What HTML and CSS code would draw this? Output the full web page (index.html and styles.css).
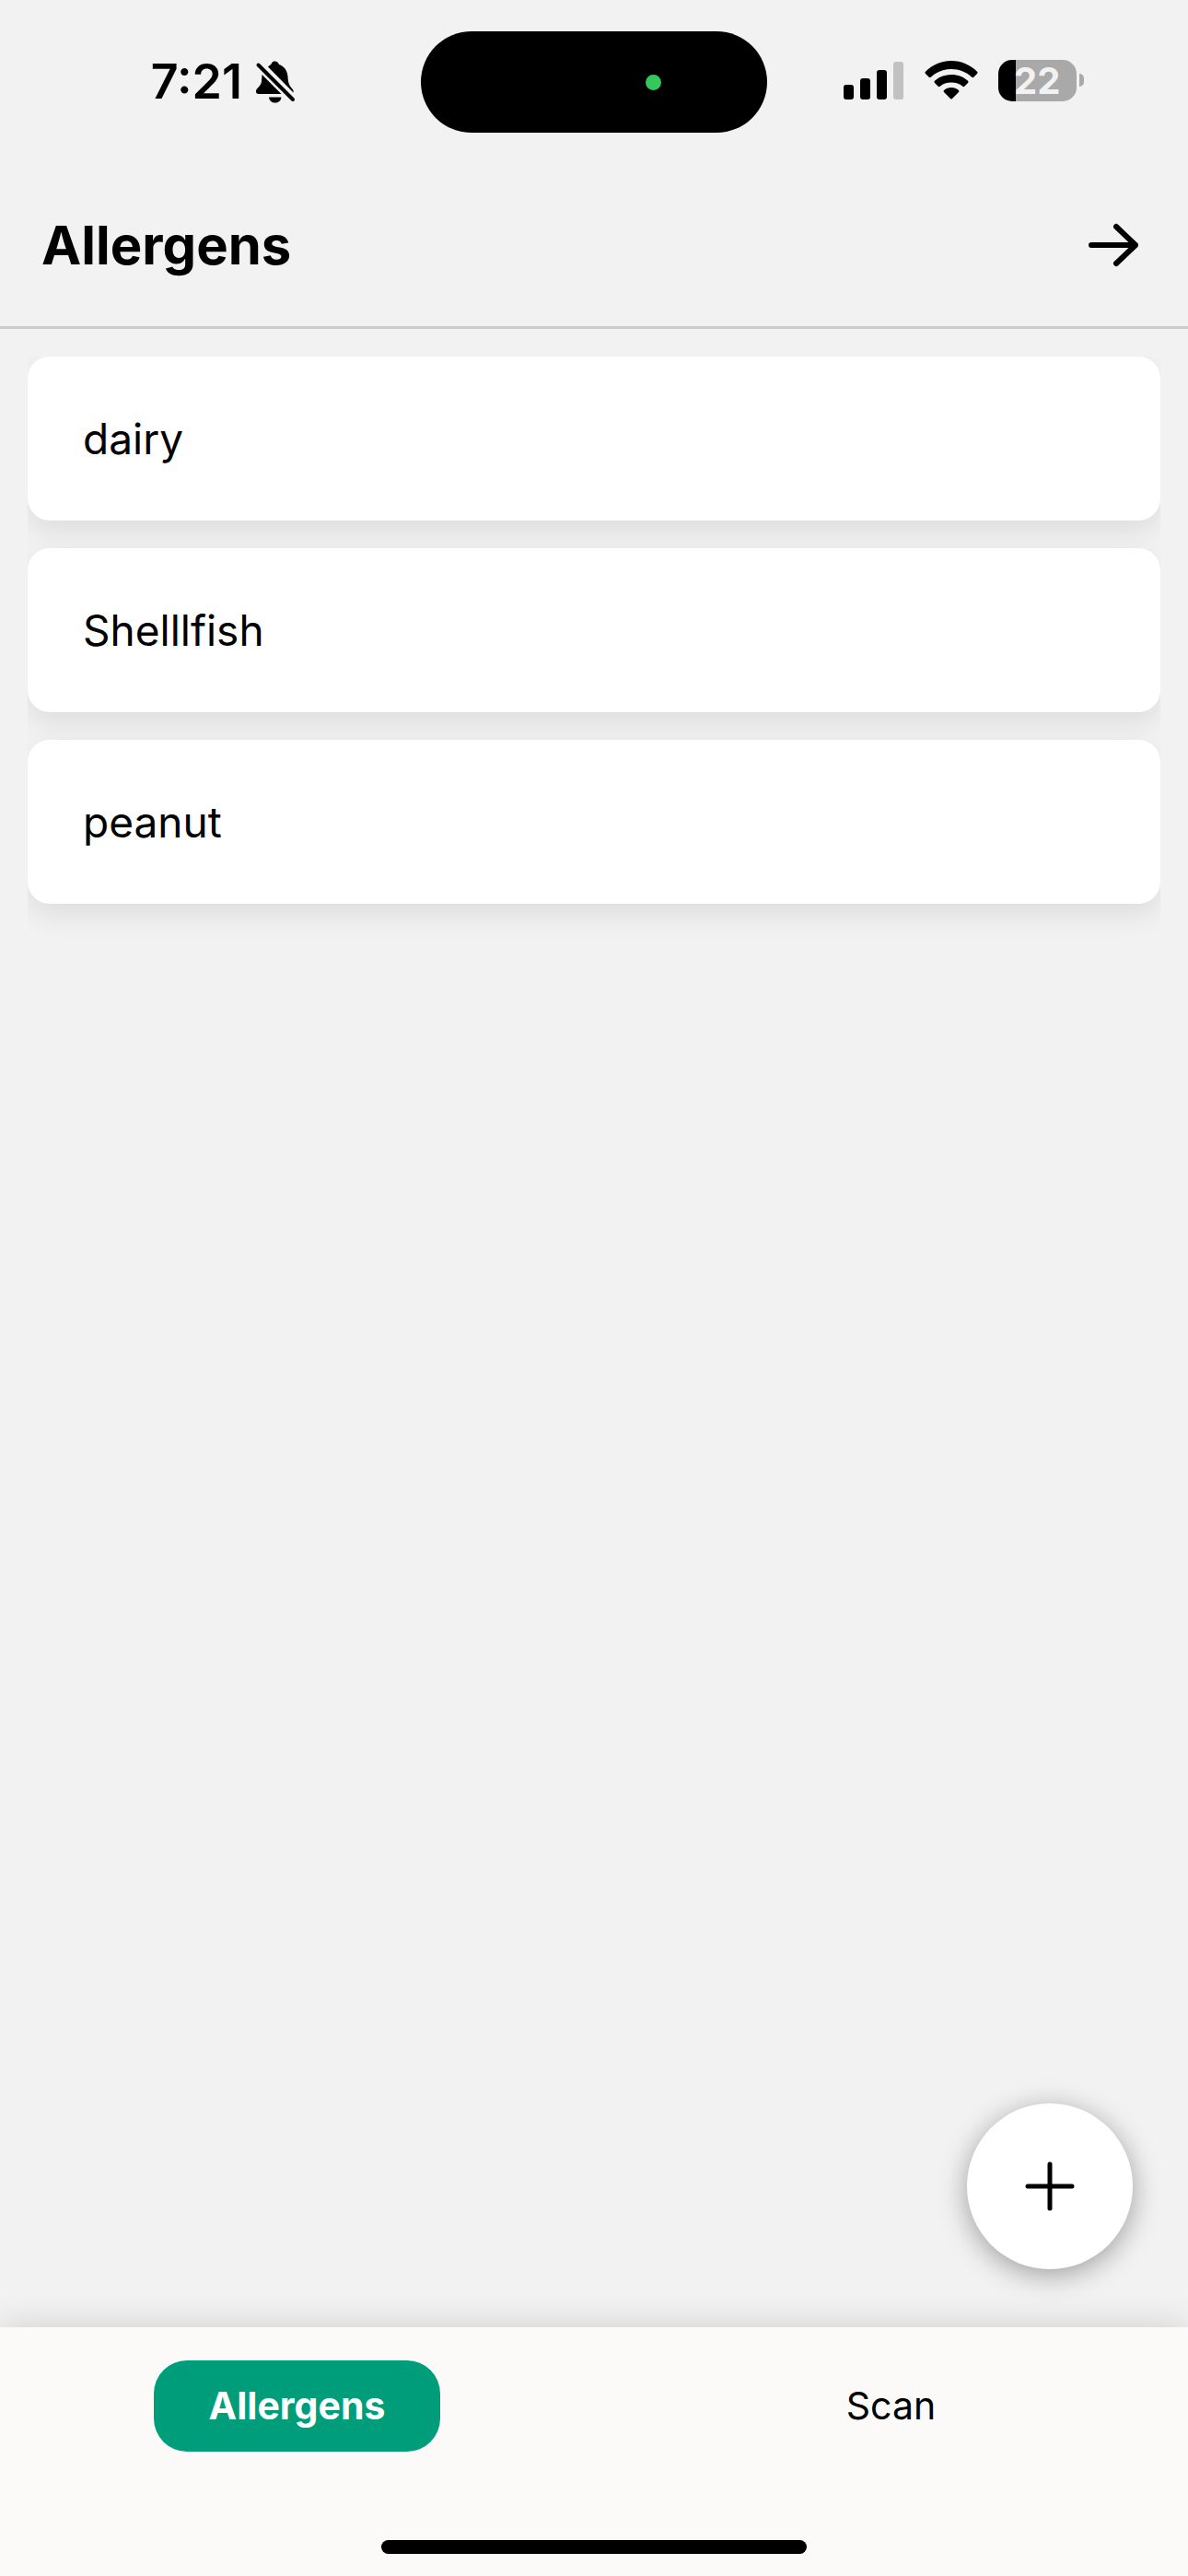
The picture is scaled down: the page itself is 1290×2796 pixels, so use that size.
FILE: index.html
```html
<!DOCTYPE html>
<html lang="en">
	<head>
		<meta charset="UTF-8" />
		<meta name="viewport" content="width=device-width, initial-scale=1.0" />
		<title>Allergens</title>
		<link rel="stylesheet" href="styles.css">
	</head>
	<body>
		<div class="status-bar">
			<div class="status-left">
				<span class="time">7:21</span>
				<svg class="bell" viewBox="0 0 44 48" width="44" height="48" aria-hidden="true">
					<path d="M14 7.500C15.500 6 17 5.500 17.500 4.500C18.500 2 20 1.500 21.500 1.500C23.500 1.500 25 2.500 26 5C31.500 7 35 11.500 35.500 18C35.800 25 37 27.500 40 31C41.500 32.500 42 34 41.500 35.500Z" />
					<path d="M7.500 16L28.500 37H4C1.500 37 .7 35.500 1 33.500C1.500 30.500 6 29 7 23.500Z" />
					<path d="M15 40.500H28.500C28 44.500 25 46.500 21.700 46.500C18.500 46.500 15.500 44.500 15 40.500Z" />
					<path class="slash" d="M3.500 5.500L41 43" />
				</svg>
			</div>
			<div class="island"><span class="camera-dot"></span></div>
			<div class="status-right">
				<svg viewBox="0 0 66 42" width="66" height="42" aria-hidden="true">
					<rect x="0" y="26" width="11" height="16" rx="3" />
					<rect x="18" y="19" width="11" height="23" rx="3" />
					<rect x="36" y="10" width="11" height="32" rx="3" />
					<rect x="54" y="1" width="11" height="41" rx="3" fill="#c1c1c1" />
				</svg>
				<svg viewBox="0 0 58 42" width="58" height="42" aria-hidden="true">
					<path d="M29 0C40 0 50 4.500 57.300 12Q58 13 57 14L53 18Q52 18.500 51 17.500C45 12 37.500 9 29 9C20.500 9 13 12 7 17.500Q6 18.500 5 18L1 14Q0 13 .7 12C8 4.500 18 0 29 0Z" />
					<path d="M29 15C36 15 42.500 17.500 47.300 22Q48 23 47 24L43 28Q42 28.500 41 27.500C38 25 34 23.500 29 23.500C24 23.500 20 25 17 27.500Q16 28.500 15 28L11 24Q10 23 10.700 22C15.500 17.500 22 15 29 15Z" />
					<path d="M29 29C32 29 35 30 37 32Q38 33 37 34L30 41Q29 42 28 41L21 34Q20 33 21 32C23 30 26 29 29 29Z" />
				</svg>
				<div class="battery">
					<span class="battery-level">22</span>
					<span class="battery-tip"></span>
				</div>
			</div>
		</div>

		<header class="header">
			<h1>Allergens</h1>
			<button class="next-button" aria-label="Next">
				<svg viewBox="0 0 54 48" width="54" height="48" aria-hidden="true">
					<path d="M3 24H51M30 4L51 24L30 44" />
				</svg>
			</button>
		</header>

		<main class="content">
			<ul class="allergen-list">
				<li>dairy</li>
				<li>Shelllfish</li>
				<li>peanut</li>
			</ul>
			<button class="add-button" aria-label="Add allergen">
				<svg viewBox="0 0 54 54" width="54" height="54" aria-hidden="true">
					<path d="M27 3V51M3 27H51" />
				</svg>
			</button>
		</main>

		<footer class="footer">
			<nav class="tabs">
				<button class="tab active">Allergens</button>
				<button class="tab">Scan</button>
			</nav>
			<div class="home-indicator"></div>
		</footer>
	</body>
</html>
```

FILE: styles.css
```css
* {
	box-sizing: border-box;
}
body {
	display: flex;
	flex-direction: column;
	min-height: 100vh;
	margin: 0;
	background: #f2f2f2;
	color: #000;
	font-family: 'Inter', sans-serif;
}
button {
	padding: 0;
	border: none;
	background: none;
	color: inherit;
	font-family: inherit;
	cursor: pointer;
}
svg {
	display: block;
}

/* Status bar */
.status-bar {
	display: grid;
	grid-template-columns: 1fr 376px 1fr;
	align-items: center;
	padding-top: 34px;
}
.status-left,
.status-right {
	display: flex;
	align-items: center;
}
.status-left {
	justify-content: flex-end;
	gap: 14px;
	padding-right: 136px;
}
.status-right {
	gap: 22px;
	padding-left: 83px;
	padding-bottom: 4px;
}
.time {
	font-size: 52px;
	font-weight: 600;
	line-height: 60px;
}
.bell .slash {
	fill: none;
	stroke: #000;
	stroke-width: 4;
	stroke-linecap: round;
}
.island {
	display: flex;
	align-items: center;
	justify-content: flex-end;
	height: 110px;
	padding-right: 115px;
	border-radius: 55px;
	background: #000;
}
.camera-dot {
	width: 17px;
	height: 17px;
	border-radius: 50%;
	background: #34c759;
}
.battery {
	display: flex;
	align-items: center;
	gap: 3px;
}
.battery-level {
	width: 85px;
	padding-left: 17px;
	border-radius: 15px;
	background: linear-gradient(to right, #000 19px, #a9a9a9 19px);
	color: #f2f2f2;
	font-size: 40px;
	font-weight: 700;
	line-height: 45px;
}
.battery-tip {
	width: 5px;
	height: 14px;
	border-radius: 0 7px 7px 0;
	background: #a9a9a9;
}

/* Header */
.header {
	display: flex;
	align-items: center;
	justify-content: space-between;
	height: 213px;
	padding: 34px 54px 0 45px;
	border-bottom: 3px solid #ccc;
}
.header h1 {
	margin: 0;
	font-size: 58px;
	font-weight: 700;
	line-height: 72px;
}
.next-button svg,
.add-button svg {
	fill: none;
	stroke: #000;
	stroke-width: 6;
	stroke-linecap: round;
	stroke-linejoin: round;
}
.add-button svg {
	stroke-width: 5;
}

/* Allergen list */
.content {
	position: relative;
	flex: 1;
	padding: 30px;
}
.allergen-list {
	display: flex;
	flex-direction: column;
	gap: 30px;
	margin: 0;
	padding: 0 0 60px;
	overflow: hidden; /* keeps the card shadows inside the list */
	list-style: none;
}
.allergen-list li {
	padding: 60px;
	border-radius: 24px;
	background: #fff;
	box-shadow: 0 12px 30px rgba(0, 0, 0, 0.085);
	font-size: 46px;
	line-height: 58px;
}
.add-button {
	display: flex;
	align-items: center;
	justify-content: center;
	position: absolute;
	right: 60px;
	bottom: 63px;
	width: 180px;
	height: 180px;
	border-radius: 50%;
	background: #fff;
	box-shadow: 0 6px 30px rgba(0, 0, 0, 0.35);
}

/* Bottom tabs */
.footer {
	position: relative;
	padding: 36px 0 24px;
	background: #fbfaf8;
	box-shadow: 0 0 36px rgba(0, 0, 0, 0.15);
}
.tabs {
	display: grid;
	grid-template-columns: 1fr 1fr;
	justify-items: center;
}
.tab {
	padding: 24px 60px;
	border-radius: 36px;
	font-size: 41px;
	line-height: 51px;
}
.tab.active {
	background: #009d7b;
	color: #fff;
	font-weight: 700;
}
.home-indicator {
	width: 462px;
	height: 15px;
	margin: 96px auto 0;
	border-radius: 8px;
	background: #000;
}
```
